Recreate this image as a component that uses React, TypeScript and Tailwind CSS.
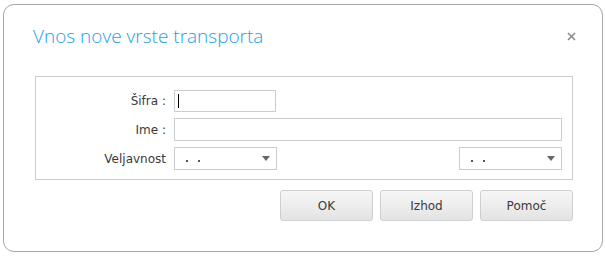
import React from "react";

function Select() {
  return (
    <div className="flex h-[23px] w-[103px] items-center justify-between border border-[#cccccc] bg-white pl-[11px] pr-[6px]">
      <span className="flex gap-[10px] pt-[4px]">
        <span className="h-[2px] w-[2px] bg-[#555]" />
        <span className="h-[2px] w-[2px] bg-[#555]" />
      </span>
      <svg width="8" height="5" viewBox="0 0 8 5">
        <path d="M0 0 H8 L4 5 Z" fill="#666" />
      </svg>
    </div>
  );
}

export default function App() {
  return (
    <div className="h-[257px] w-[605px] bg-white pl-[3px] pt-[4px] font-['DejaVu_Sans',sans-serif]">
      <div className="flex h-[248px] w-[600px] flex-col rounded-[11px] border border-[#a6a6a6] bg-white">
        {/* header */}
        <div className="flex items-center justify-between pl-[29px] pr-[26px] pt-[18px]">
          <h1 className="font-['Open_Sans',sans-serif] text-[19px] font-light leading-[26px] text-[#25a0e4]">
            Vnos nove vrste transporta
          </h1>
          <svg width="9" height="9" viewBox="0 0 9 9" className="mt-[1px]">
            <path d="M1 1 L8 8 M8 1 L1 8" stroke="#8a8a8a" strokeWidth="1.6" />
          </svg>
        </div>

        {/* form */}
        <div className="ml-[31px] mt-[27px] h-[104px] w-[538px] border border-[#cbcbcb] pt-[13px]">
          <div className="grid grid-cols-[130px_1fr] items-center gap-x-[8px] gap-y-[6px] pr-[10px] text-[12px] text-[#3a3a3a]">
            <span className="text-right">Šifra :</span>
            <div className="flex h-[22px] w-[102px] items-center border border-[#cccccc] pl-[3px]">
              <span className="h-[14px] w-px bg-black" />
            </div>

            <span className="text-right">Ime :</span>
            <div className="h-[23px] border border-[#cccccc]" />

            <span className="text-right">Veljavnost</span>
            <div className="flex justify-between">
              <Select />
              <Select />
            </div>
          </div>
        </div>

        {/* buttons */}
        <div className="flex justify-end gap-[7px] pr-[29px] pt-[10px]">
          {["OK", "Izhod", "Pomoč"].map((b) => (
            <button
              key={b}
              className="h-[31px] w-[93px] rounded-[3px] border border-[#cfcfcf] bg-gradient-to-b from-[#f7f7f7] to-[#e3e3e3] text-[12px] text-[#3a3a3a]"
            >
              {b}
            </button>
          ))}
        </div>
      </div>
    </div>
  );
}
